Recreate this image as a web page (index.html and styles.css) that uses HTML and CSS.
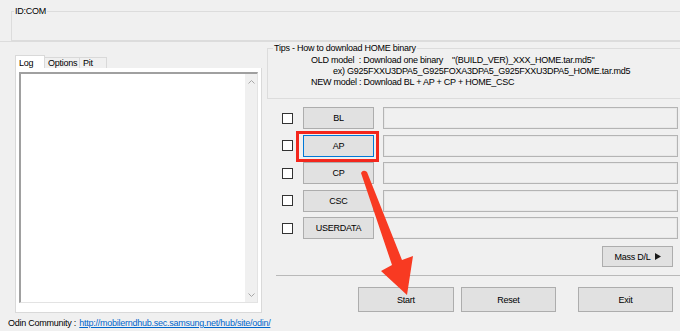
FILE: index.html
```html
<!DOCTYPE html>
<html lang="en">
<head>
  <meta charset="UTF-8" />
  <title>Odin3</title>
  <link rel="stylesheet" href="styles.css">
</head>
<body>
  <div class="idbar">
    <div class="group idbox">
      <span class="group-title">ID:COM</span>
    </div>
  </div>

  <div class="main">
    <div class="left">
      <div class="tabs">
        <span class="tab active">Log</span>
        <span class="tab">Options</span>
        <span class="tab">Pit</span>
      </div>
      <div class="tabpanel">
        <div class="logbox">
          <div class="logtext"></div>
          <div class="scrollbar">
            <svg width="7" height="4" viewBox="0 0 7 4"><path d="M0.5 3.5 L3.5 0.5 L6.5 3.5" fill="none" stroke="#a6a6a6" stroke-width="1"/></svg>
            <svg width="7" height="4" viewBox="0 0 7 4"><path d="M0.5 0.5 L3.5 3.5 L6.5 0.5" fill="none" stroke="#a6a6a6" stroke-width="1"/></svg>
          </div>
        </div>
      </div>
    </div>

    <div class="right">
      <div class="group tips">
        <span class="group-title">Tips - How to download HOME binary</span>
        <div class="tip-line">OLD model&nbsp; : Download one binary&nbsp;&nbsp;&nbsp; "(BUILD_VER)_XXX_HOME.tar.md5"</div>
        <div class="tip-line sub">ex) G925FXXU3DPA5_G925FOXA3DPA5_G925FXXU3DPA5_HOME.tar.md5</div>
        <div class="tip-line">NEW model : Download BL + AP + CP + HOME_CSC</div>
      </div>

      <div class="files">
        <div class="file-row">
          <span class="check"></span>
          <span class="btn file-btn">BL</span>
          <span class="path"></span>
        </div>
        <div class="file-row">
          <span class="check"></span>
          <span class="btn file-btn focused">AP</span>
          <span class="path"></span>
        </div>
        <div class="file-row">
          <span class="check"></span>
          <span class="btn file-btn">CP</span>
          <span class="path"></span>
        </div>
        <div class="file-row">
          <span class="check"></span>
          <span class="btn file-btn">CSC</span>
          <span class="path"></span>
        </div>
        <div class="file-row">
          <span class="check"></span>
          <span class="btn file-btn">USERDATA</span>
          <span class="path"></span>
        </div>
      </div>

      <div class="mass-row">
        <span class="btn mass">Mass D/L <svg width="6" height="7" viewBox="0 0 6 7"><path d="M0 0 L6 3.5 L0 7 Z" fill="#1a1a1a"/></svg></span>
      </div>

      <div class="separator"></div>

      <div class="actions">
        <span class="btn action start">Start</span>
        <span class="btn action reset">Reset</span>
        <span class="btn action exit">Exit</span>
      </div>
    </div>
  </div>

  <div class="footer">
    Odin Community : <a href="#">http://mobilerndhub.sec.samsung.net/hub/site/odin/</a>
  </div>

  <!-- annotation overlay -->
  <div class="highlight"></div>
  <svg class="arrow" width="680" height="331" viewBox="0 0 680 331">
    <path d="M361 173 Q363 169 367 172 L402 260 L413 256 L407 295 L381 271 L392 265 Z" fill="#f83a22"/>
  </svg>
</body>
</html>
```

FILE: styles.css
```css
body {
  margin: 0;
  width: 680px;
  height: 331px;
  overflow: hidden;
  position: relative;
  background-color: #f0f0f0;
  color: #000;
  font-family: "Liberation Sans", Arial, sans-serif;
  font-size: 9px;
  letter-spacing: -0.25px;
}
.group {
  border: 1px solid #dcdcdc;
  box-sizing: border-box;
}
.group-title {
  display: block;
  width: max-content;
  margin: -7px 0 0 5px;
  padding: 0 1px;
  line-height: 12px;
  background-color: #f0f0f0;
}
.idbar {
  height: 41px;
  border-bottom: 1px solid #dcdcdc;
  overflow: hidden;
}
.idbox {
  margin: 11px -10px 0 11px;
  height: 30px;
  border-right: none;
}
.idbox .group-title {
  margin-left: 2px;
}

.main {
  display: flex;
}
.left {
  width: 267px;
  padding: 13px 0 0 15px;
  box-sizing: border-box;
}
.tabs {
  display: flex;
  align-items: flex-end;
  height: 13px;
}
.tab {
  height: 11px;
  line-height: 11px;
  padding: 0 3px;
  border: 1px solid #d9d9d9;
  border-bottom: none;
  box-sizing: border-box;
}
.tab + .tab {
  margin-left: -1px;
}
.tab.active {
  height: 13px;
  width: 30px;
  background-color: #fff;
  line-height: 14px;
}
.tab:nth-child(2) {
  width: 36px;
}
.tab:nth-child(3) {
  width: 28px;
}
.tabpanel {
  width: 247px;
  height: 245px;
  background-color: #fff;
  border: 1px solid #d9d9d9;
  border-top: none;
  box-sizing: border-box;
  padding: 4px 3px 0 3px;
}
.logbox {
  display: flex;
  height: 231px;
  border-top: 2px solid #a0a0a0;
  border-left: 2px solid #a0a0a0;
  border-right: 1px solid #e3e3e3;
  border-bottom: 1px solid #e3e3e3;
  box-sizing: border-box;
}
.logtext {
  flex: 1;
  background-color: #fff;
}
.scrollbar {
  width: 12px;
  background-color: #f0f0f0;
  display: flex;
  flex-direction: column;
  justify-content: space-between;
  align-items: center;
  padding: 6px 0 5px;
  box-sizing: border-box;
}

.right {
  flex: 1;
  display: flex;
  flex-direction: column;
}
.tips {
  margin-top: 6px;
  height: 51px;
  margin-right: -4px;
  border-right: none;
}
.tip-line {
  line-height: 11px;
  padding-left: 43px;
  white-space: pre;
}
.tip-line:first-of-type {
  margin-top: 1px;
}
.tip-line.sub {
  padding-left: 65px;
}

.files {
  margin-top: 8px;
  display: flex;
  flex-direction: column;
  gap: 5.5px;
}
.file-row {
  display: flex;
  align-items: center;
  height: 22px;
  padding: 0 2px 0 15px;
}
.check {
  width: 11px;
  height: 11px;
  border: 1px solid #333;
  background-color: #fff;
  box-sizing: border-box;
  margin-right: 10px;
}
.btn {
  display: flex;
  align-items: center;
  justify-content: center;
  gap: 4px;
  background-color: #e1e1e1;
  border: 1px solid #adadad;
  box-sizing: border-box;
}
.file-btn {
  width: 71px;
  height: 22px;
}
.file-btn.focused {
  border-color: #0078d7;
}
.path {
  flex: 1;
  height: 22px;
  margin-left: 9px;
  border: 1px solid #b4b4b4;
  box-shadow: inset 0 0 0 1px #e8e8e8;
  box-sizing: border-box;
}

.mass-row {
  display: flex;
  justify-content: flex-end;
  padding-right: 7px;
  margin-top: 7px;
}
.mass {
  width: 71px;
  height: 21px;
}
.separator {
  margin: 8px 0 0 9px;
  border-top: 1px solid #b9b9b9;
}
.actions {
  display: flex;
  margin-top: 11px;
  padding-left: 91px;
}
.action {
  height: 25px;
  width: 95px;
}
.start {
  width: 96px;
}
.reset {
  margin-left: 7px;
}
.exit {
  margin-left: 22px;
}

.footer {
  margin-top: 4px;
  padding-left: 8px;
  line-height: 12px;
}
.footer a {
  color: #0066cc;
  text-decoration: underline;
  margin-left: 1px;
}

.highlight {
  position: absolute;
  left: 296px;
  top: 131px;
  width: 83px;
  height: 31px;
  border: 3px solid #f3261c;
  box-sizing: border-box;
}
.arrow {
  position: absolute;
  left: 0;
  top: 0;
  pointer-events: none;
}
```
